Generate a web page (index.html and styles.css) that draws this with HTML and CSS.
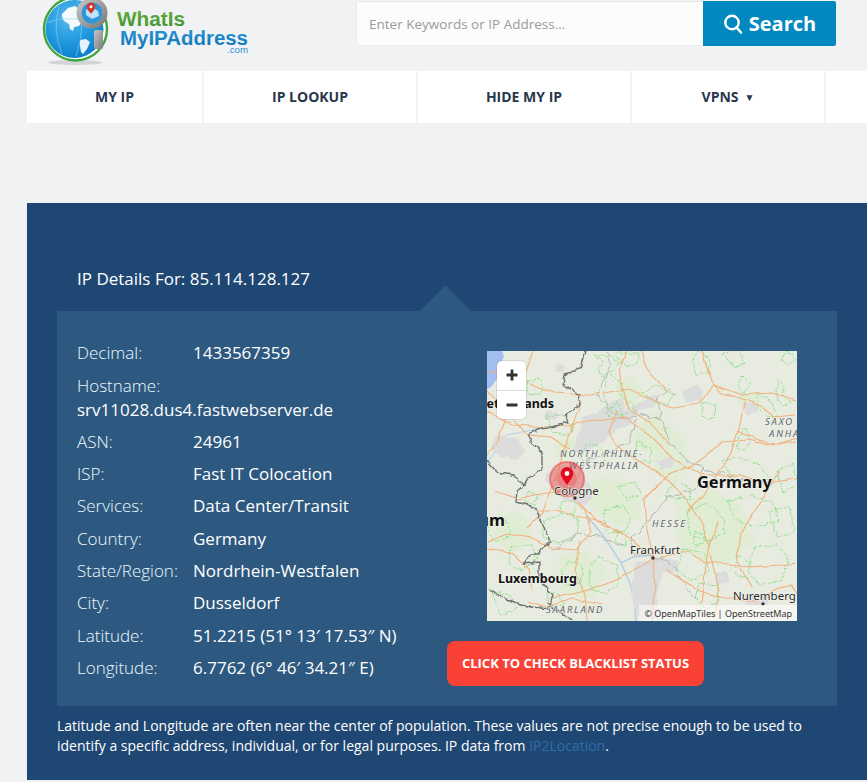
FILE: index.html
```html
<!DOCTYPE html>
<html lang="en">
<head>
<meta charset="utf-8">
<title>WhatIsMyIPAddress</title>
<link rel="stylesheet" href="styles.css">
</head>
<body>
<header class="top">
  <a class="logo" href="#" aria-label="WhatIsMyIPAddress.com">
    <svg width="220" height="71" viewBox="0 0 220 71">
      <defs>
        <radialGradient id="sea" cx="0.4" cy="0.3" r="0.8"><stop offset="0" stop-color="#58b8ec"/><stop offset=".55" stop-color="#1f98de"/><stop offset="1" stop-color="#0a78c4"/></radialGradient>
        <linearGradient id="gr" x1="0" y1="0" x2="0" y2="1"><stop offset="0" stop-color="#66b23f"/><stop offset="1" stop-color="#3f9132"/></linearGradient>
        <linearGradient id="bl" x1="0" y1="0" x2="0" y2="1"><stop offset="0" stop-color="#2c9ad6"/><stop offset="1" stop-color="#0a74b8"/></linearGradient>
        <linearGradient id="mg" x1="0" y1="0" x2="1" y2="1"><stop offset="0" stop-color="#c4c4c4"/><stop offset="1" stop-color="#7d7d7d"/></linearGradient>
      </defs>
      <ellipse cx="35" cy="62.500" rx="27" ry="2.500" fill="#d3d4d6"/>
      <circle cx="35.500" cy="29" r="31.500" fill="#fff" stroke="#3da63a" stroke-width="2.400"/>
      <circle cx="34.500" cy="29" r="29" fill="url(#sea)"/>
      <path d="M22 14l6-6 7-2 6 4 3 6 5 3-2 5-6-1-2 3-5 1-1 4-3-2-1-5-5-3-2-4z" fill="#f4fbfe"/>
      <path d="M40 40l6-1 4 3-3 7-4 5-2-2-1-6z" fill="#e4f5fd"/>
      <path d="M8 22q26-8 52 3M19 6q-7 24 3 48M38 2q8 26-2 54" fill="none" stroke="#8fd2f3" stroke-width=".6"/>
      <circle cx="52" cy="13" r="13" fill="#2f97d8" stroke="url(#mg)" stroke-width="5"/>
      <path d="M46 10q6-4 12 1l1 5-7 3-6-4z" fill="#bde3f8"/>
      <path d="M51 2.500a4.200 4.200 0 0 1 4.200 4.200c0 3-4.200 7-4.200 7s-4.200-4-4.200-7A4.200 4.200 0 0 1 51 2.500z" fill="#d8342b"/>
      <circle cx="51" cy="6.700" r="1.500" fill="#fff"/>
      <rect x="54" y="30" width="9" height="19" rx="2" fill="url(#mg)"/>
      <text class="logo-a" x="77" y="26" textLength="68" lengthAdjust="spacingAndGlyphs">WhatIs</text>
      <text class="logo-b" x="80" y="44.500" textLength="128" lengthAdjust="spacingAndGlyphs">MyIPAddress</text>
      <text class="logo-c" x="187" y="52.500" textLength="21" lengthAdjust="spacingAndGlyphs">.com</text>
    </svg>
  </a>
  <form class="search">
    <input class="search-input" type="text" placeholder="Enter Keywords or IP Address...">
    <button class="search-btn" type="button">
      <svg width="20" height="20" viewBox="0 0 20 20"><circle cx="9" cy="8.500" r="6.700" fill="none" stroke="#fff" stroke-width="2.400"/><path d="M13.500 13.500l4.500 5" stroke="#fff" stroke-width="2.600" fill="none" stroke-linecap="round"/></svg>
      Search
    </button>
  </form>
</header>

<nav class="nav">
  <a class="nav-item w1" href="#">MY IP</a>
  <a class="nav-item w2" href="#">IP LOOKUP</a>
  <a class="nav-item w2" href="#">HIDE MY IP</a>
  <a class="nav-item w3" href="#">VPNS <span class="caret">▼</span></a>
  <a class="nav-item w4" href="#"></a>
</nav>

<section class="panel">
  <h2 class="panel-title">IP Details For: 85.114.128.127</h2>
  <div class="card">
    <div class="details">
      <p class="row"><span class="label">Decimal:</span><span class="value">1433567359</span></p>
      <p class="row stacked"><span class="label">Hostname:</span><span class="value">srv11028.dus4.fastwebserver.de</span></p>
      <p class="row"><span class="label">ASN:</span><span class="value">24961</span></p>
      <p class="row"><span class="label">ISP:</span><span class="value">Fast IT Colocation</span></p>
      <p class="row"><span class="label">Services:</span><span class="value">Data Center/Transit</span></p>
      <p class="row"><span class="label">Country:</span><span class="value">Germany</span></p>
      <p class="row"><span class="label">State/Region:</span><span class="value">Nordrhein-Westfalen</span></p>
      <p class="row"><span class="label">City:</span><span class="value">Dusseldorf</span></p>
      <p class="row"><span class="label">Latitude:</span><span class="value">51.2215 (51° 13′ 17.53″ N)</span></p>
      <p class="row"><span class="label">Longitude:</span><span class="value">6.7762 (6° 46′ 34.21″ E)</span></p>
    </div>
    <div class="side">
      <div class="map">
        <svg width="310" height="270" viewBox="0 0 310 270">
          <defs>
            <filter id="wig" x="-5%" y="-5%" width="110%" height="110%"><feTurbulence type="fractalNoise" baseFrequency=".09" numOctaves="2" seed="4"/><feDisplacementMap in="SourceGraphic" scale="9" xChannelSelector="R" yChannelSelector="G"/></filter>
            <filter id="wig2" x="-5%" y="-5%" width="110%" height="110%"><feTurbulence type="fractalNoise" baseFrequency=".05" numOctaves="2" seed="9"/><feDisplacementMap in="SourceGraphic" scale="5" xChannelSelector="R" yChannelSelector="G"/></filter>
            <filter id="wig3" x="-5%" y="-5%" width="110%" height="110%"><feTurbulence type="fractalNoise" baseFrequency=".16" numOctaves="2" seed="2"/><feDisplacementMap in="SourceGraphic" scale="5" xChannelSelector="R" yChannelSelector="G"/></filter>
          </defs>
          <rect width="310" height="270" fill="#e8ebdf"/>
          <!-- water -->
          <path d="M0 0h15l2 6-5 8-2 14-6 8-4 2z" fill="#a3bff0"/>
          <path d="M0 112l20-28 30-6" fill="none" stroke="#b9d3ee" stroke-width="1.200"/>
          <path d="M100 165l18 22 16 25 12-6 20-2M134 212l8 18 5 15 2 25" fill="none" stroke="#b5cfe6" stroke-width="1.500"/>
          <!-- forests -->
          <g fill="#e1ecd4" filter="url(#wig)">
            <path d="M166 60l12 14 20 16 4 22-14 18-16-6-8-20-18-8 2-18z"/>
            <path d="M70 90l26-8 4 14-18 12-14-4z"/>
            <path d="M100 130l30-4 20 14 4 26-22 8-22-12-14-16z"/>
            <path d="M250 40l22 4 8 14-22 6z"/>
            <path d="M10 160l28 4 10 24-24 14-16-10z"/>
            <path d="M190 150l36-10 28 14 14 34-30 26-34-6-16-26z"/>
            <path d="M70 205l30-6 20 22-12 26-34-4z"/>
            <path d="M130 30l18-4 10 18-16 10-14-10z"/>
          </g>
          <!-- urban -->
          <g fill="#dcdcdc" filter="url(#wig3)">
            <path d="M96 66l16-6 14-10 10-2 2 10 16-6 12-8 6 2-6 10-14 4-10 14-14 6-14 12-20 10-8-2 6-16z"/>
            <path d="M60 122l16-8 16 2 10 18 4 14-10 6-18-4-10-12-10-8z"/>
            <path d="M8 84l22 4 8 12-6 8-18-2-10-10z"/>
            <path d="M195 42l14-8 8 6-4 10-14 2zM255 52l14-2 2 10-12 4zM170 110l14-4 4 8-14 6z"/>
            <path d="M148 212l24-6 18 4 2 10-16 2-6 16 2 30h-20l-8-26z"/>
            <path d="M70 12l8 2-2 8-8-2zM60 60l10 2-2 8-10-2z"/>
            <path d="M228 222l12-2 2 10-12 4zM258 245l22-2 2 10-22 2z"/>
          </g>
          <!-- parks -->
          <g fill="none" stroke="#7fdf7f" stroke-width="1" stroke-dasharray="1.500 1" filter="url(#wig3)">
            <path d="M108 5l8 6-6 8 6 6 12-6 6-10-8-4zM130 2l-4 6 14 8 10-4 4-10z"/>
            <path d="M122 22l14 12-2 12 10 6 6 8-14 4-16-8-4-16z"/>
            <path d="M210 0l14 8-4 14-10 2-4-12zM236 2l10 14 12-4-6-12zM255 25l8 8-6 10-6-8z"/>
            <path d="M290 28l8 6-2 12 8 4-6 6-8-8zM300 0l-6 8 8 6 8-6z"/>
            <path d="M155 42l16-8 14 10-4 10-12-2zM270 42l14 8 6 14-10 2-8-8z"/>
            <path d="M258 78l6 12-6 10-8-4 2-12z"/>
            <path d="M60 65l16-2 12 14-8 8-14-4zM100 92l14 4 4 14-14 6-10-8z"/>
            <path d="M235 110l18-4 20 8 10 14-24 4-16-8z"/>
            <path d="M118 160l18-6 8 12-6 14-16 2-6-10zM130 135l18-4 6 12-14 6z"/>
            <path d="M56 170l22-8 14 6-2 16-18 8-16-6zM75 150l14 2-2 12-14-2z"/>
            <path d="M24 196l20-2 6 14-16 12-12-8zM2 170l16-2 6 16-14 8-8-8z"/>
            <path d="M112 205l18 10 2 18-14 10-14-6-2-20zM82 210l14 4-2 18-14 2-6-14z"/>
            <path d="M200 160l20-8 16 14 2 16-16 8-18-6zM240 150l24-6 22 8 6 18-24 6-20-8z"/>
            <path d="M196 198l22 4 4 18-18 10-14-12zM268 196l22-2 12 14-8 22-22 4-12-16z"/>
            <path d="M178 145l10-14 16 6-2 12zM250 205l14 6-4 16-12-4zM282 160l20-4 6 24-18 6z"/>
            <path d="M290 120l16-8 4 22-14 8zM5 240l18 4 6 14-16 6zM212 232l18 2 2 18-14 6-10-10z"/>
            <path d="M130 50l6 14-8 6-8-8zM40 30l14-2 2 14-14 2zM215 50l14 4-2 14-12-2z"/>
            <path d="M150 90l14 8-2 14-14-4zM60 240l12 2 4 12-14 2zM208 180l10 4-2 10-10-2zM130 180l10 2-2 12-10-2zM40 140l10 4-2 10-10-4z"/>
          </g>
          <!-- state lines -->
          <g fill="none" stroke="#b0b2ae" stroke-width=".9" filter="url(#wig)">
            <path d="M118 0l6 14-14 30 22 24 26-4 16 6-4-22 12-10 8 8"/>
            <path d="M172 64l10 24 18 22 14 6 12 6 10 0 14 8 20-2 12 10"/>
            <path d="M150 68l-8 22-16 10-26 10-14 22"/>
            <path d="M216 116l-8 22-30 10-16 22-18 18 2 14 36 8 18 26 10 14"/>
            <path d="M64 200l26-16 24 2 22 10"/>
          </g>
          <!-- roads -->
          <g fill="none" stroke="#f1b27c" stroke-width="1.100" filter="url(#wig2)">
            <path d="M0 20l30 6 36 16 38 2 38-6 26 12 18 6 26-4 16-18 26 10 30-2 26 8"/>
            <path d="M140 0l-8 20 4 18 6 20 22 14 18 22"/>
            <path d="M215 0l4 14 6 16 10 12 26 8 14 6 12 10 22-2"/>
            <path d="M95 50l-12 30-6 20-8 26-6 14-8 22-14 14"/>
            <path d="M0 60l24 14 40 2 60-8 14-2 26 20 22 22 30 16 38 0 22 8 34-4"/>
            <path d="M130 60l-8 20 4 12 16 12 36 22 14 14 20 26 10 26-4 30-4 30"/>
            <path d="M258 48l-6 30-8 24-16 24-12 20-16 16"/>
            <path d="M84 145l14 14 6 22-14 18-26-2-20-10-24-4-20 8"/>
            <path d="M92 150l16 20 24 10 20 14 14 12 2 30-4 34"/>
            <path d="M166 207l-30 18-20 10-30 8-22 4"/>
            <path d="M166 207l-6-28-2-32 10-10 16-14 20-8 32-24 26-2 22 6 26-8"/>
            <path d="M180 218l32 22 22 6 20 4 14 0 20-10 16-6 6 10"/>
            <path d="M172 208l30-8 16 12 24 2 20 2 32-2 16-2"/>
            <path d="M230 170l-8 30 4 16 6 22-4 30"/>
            <path d="M292 120l-12 20-14 20-10 20-8 26 16 30"/>
            <path d="M0 198l24 4 18 16 4 22"/>
            <path d="M46 0l-6 18-14 30-8 22-8 22-10 12"/>
            <path d="M0 40l16 18 24 26 24 2 18 12"/>
            <path d="M50 160l20 0 30 8 18 4 14 10"/>
            <path d="M8 140l22 8 16-4 30-4M40 250l20 6 26-8 30 6"/>
            <path d="M250 80l34 14 26-4M180 40l-20-22-6-18"/>
            <path d="M94 190l-6 30 10 24 2 26"/>
          </g>
          <!-- national border -->
          <g fill="none" stroke="#6d7172" stroke-width="1.400" filter="url(#wig3)">
            <path d="M98 0l-5 17-15 7-2 10 17 10-2 12-13 8 3 8-30 7-8 3v9l12 10v17l-12 8-7 9-6 5-1 11 12 3 8 4 4 6-1 4 4 6 2 6 3 5 3 7-8 4-4 7-8 0-8 10 16-2v17l14 16-4 14-18-2-25-8-18-10"/>
            <path d="M61 251l8 8 17 10M0 110l10 11 16 3 10 10"/>
          </g>
          <!-- labels -->
          <g class="map-labels">
            <text class="m-bold m-lg" x="67" y="57" text-anchor="end">Netherlands</text>
            <text class="m-state" x="73" y="106">NORTH RHINE-</text>
            <text class="m-state" x="82" y="118">WESTPHALIA</text>
            <text class="m-state" x="278" y="74">SAXO</text>
            <text class="m-state" x="282" y="86">ANHA</text>
            <text class="m-bold m-xl" x="210" y="137">Germany</text>
            <text class="m-bold m-xl" x="18" y="175" text-anchor="end">Belgium</text>
            <text class="m-state" x="165" y="176">HESSE</text>
            <text class="m-city" x="143" y="203">Frankfurt</text>
            <text class="m-bold m-md" x="11" y="232">Luxembourg</text>
            <text class="m-state" x="59" y="262">SAARLAND</text>
            <text class="m-city" x="246" y="249">Nuremberg</text>
          </g>
          <circle cx="166" cy="207" r="1.700" fill="#333"/>
          <circle cx="276" cy="253" r="1.700" fill="#333"/>
          <circle cx="88" cy="147" r="1.700" fill="#333"/>
          <!-- marker -->
          <circle cx="80" cy="128" r="17" fill="#f24040" fill-opacity=".4" stroke="#ee3a3a" stroke-opacity=".5" stroke-width="2"/>
          <circle cx="80" cy="128" r="10" fill="#f24040" fill-opacity=".3"/>
          <text class="m-city" x="67" y="144">Cologne</text>
          <path d="M80 116a6.300 6.300 0 0 1 6.300 6.300c0 4-6.300 11.700-6.300 11.700s-6.300-7.700-6.300-11.700A6.300 6.300 0 0 1 80 116z" fill="#e8091e"/>
          <circle cx="80" cy="122.500" r="2.400" fill="#fff"/>
        </svg>
        <div class="zoom-ctl">
          <span class="zoom-btn">
            <svg width="14" height="14" viewBox="0 0 14 14"><path d="M7 1.500v11M1.500 7h11" stroke="#333" stroke-width="2.800"/></svg>
          </span>
          <span class="zoom-btn">
            <svg width="14" height="14" viewBox="0 0 14 14"><path d="M1.500 7h11" stroke="#333" stroke-width="2.800"/></svg>
          </span>
        </div>
        <div class="attrib">© OpenMapTiles | OpenStreetMap</div>
      </div>
      <a class="blacklist" href="#">CLICK TO CHECK BLACKLIST STATUS</a>
    </div>
  </div>
  <p class="note">Latitude and Longitude are often near the center of population. These values are not precise enough to be used to identify a specific address, individual, or for legal purposes. IP data from <a class="note-link" href="#">IP2Location</a>.</p>
</section>
</body>
</html>
```
FILE: styles.css
```css
* { box-sizing: border-box; }
html, body { margin: 0; padding: 0; height: 782px; overflow: hidden; }
body { background: #f1f2f4; font-family: "Open Sans", "Liberation Sans", sans-serif; color: #fff; }
a { text-decoration: none; }

.top { display: flex; height: 71px; padding-left: 40px; }
.logo { display: block; width: 220px; height: 71px; }
.logo svg { display: block; }
.logo-a { font: 700 21px "Liberation Sans", sans-serif; fill: url(#gr); }
.logo-b { font: 700 19.500px "Liberation Sans", sans-serif; fill: url(#bl); }
.logo-c { font: 400 8.500px "Liberation Sans", sans-serif; fill: #2a90cf; }

.search { display: flex; margin: 1px 0 0 96px; height: 45px; }
.search-input { width: 347px; height: 45px; padding: 0 12px; border: 1px solid #e9e9e9; border-right: 0; border-radius: 2px 0 0 2px; background: #fcfcfc; font: 400 13.500px "Open Sans", sans-serif; color: #555; outline: 0; }
.search-input::placeholder { color: #9a9a9a; opacity: 1; }
.search-btn { display: flex; align-items: center; justify-content: center; gap: 6px; width: 133px; height: 45px; padding: 0; border: 0; border-radius: 0 2px 2px 0; background: #0088bf; color: #fff; font: 700 20px "Open Sans", sans-serif; }

.nav { display: flex; gap: 2px; height: 52px; margin-left: 27px; overflow: hidden; }
.nav-item { display: flex; align-items: center; justify-content: center; flex: none; height: 52px; padding-bottom: 1px; background: #fff; color: #29374d; font-size: 14px; font-weight: 700; }
.w1 { width: 175px; }
.w2 { width: 212px; }
.w3 { width: 192px; }
.w4 { width: 60px; }
.caret { margin-left: 6px; font-size: 10px; }

.panel { height: 577px; margin: 80px 0 0 27px; padding: 0 30px; background: #1f4773; }
.panel-title { margin: 0; padding: 64px 0 0 20px; height: 108px; font-size: 17px; font-weight: 400; line-height: 24px; }
.card { position: relative; display: flex; width: 780px; height: 395px; padding: 30px 0 0 20px; background: #2d5980; }
.card::before { content: ""; position: absolute; left: 370px; top: -18px; width: 37px; height: 37px; background: #2d5980; transform: rotate(45deg); }
.details { position: relative; width: 370px; padding-top: .3px; }
.row { display: flex; margin: 0 0 8.300px; font-size: 17px; line-height: 24px; }
.stacked { display: block; }
.stacked .label, .stacked .value { display: block; width: auto; }
.label { flex: none; width: 116px; font-weight: 300; color: #effaff; }
.value { font-weight: 400; color: #fff; }

.side { position: relative; display: flex; flex-direction: column; align-items: flex-start; padding-top: 10px; }
.map { position: relative; width: 310px; height: 270px; margin-left: 40px; overflow: hidden; }
.map svg { display: block; }
.map-labels text { font-family: "Noto Sans", sans-serif; }
.m-bold { font-weight: 700; fill: #111; paint-order: stroke; stroke: #f2f3ec; stroke-width: 1.500px; }
.m-lg { font-size: 12.500px; }
.m-md { font-size: 12.500px; }
.m-xl { font-size: 16.400px; }
.m-state { font-size: 9.500px; font-style: italic; letter-spacing: 1.800px; fill: #5d6470; paint-order: stroke; stroke: #eef0e6; stroke-width: 1.200px; }
.m-city { font-family: "Noto Sans", sans-serif; font-size: 11.500px; fill: #2a2a2a; paint-order: stroke; stroke: #f2f3ec; stroke-width: 1.200px; }

.zoom-ctl { position: absolute; left: 10px; top: 10px; display: flex; flex-direction: column; width: 29px; height: 58px; background: #fff; border-radius: 5px; box-shadow: 0 0 0 1px rgba(0, 0, 0, .08); overflow: hidden; }
.zoom-btn { display: flex; align-items: center; justify-content: center; flex: 1; }
.zoom-btn + .zoom-btn { border-top: 1px solid #ddd; }
.attrib { position: absolute; right: 0; bottom: 0; padding: 1px 5px 0; height: 16px; background: rgba(255, 255, 255, .55); color: #333; font: 400 9px/15px "Noto Sans", sans-serif; }

.blacklist { display: flex; align-items: center; justify-content: center; width: 257px; height: 45px; margin-top: 20px; padding-bottom: 1px; border-radius: 8px; background: #f94135; color: #fff; font-size: 13px; font-weight: 700; }

.note { margin: 10px 0 0; width: 780px; font-size: 14px; line-height: 20px; color: #fff; }
.note-link { color: #2f6ea8; }
```
